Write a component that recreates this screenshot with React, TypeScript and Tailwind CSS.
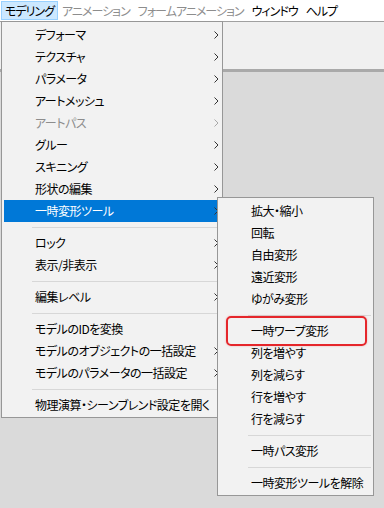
import React from "react"

type Item = { label: string; arrow?: boolean; disabled?: boolean; active?: boolean } | "sep"

const MAIN: Item[] = [
  { label: "デフォーマ", arrow: true },
  { label: "テクスチャ", arrow: true },
  { label: "パラメータ", arrow: true },
  { label: "アートメッシュ", arrow: true },
  { label: "アートパス", arrow: true, disabled: true },
  { label: "グルー", arrow: true },
  { label: "スキニング", arrow: true },
  { label: "形状の編集", arrow: true },
  { label: "一時変形ツール", arrow: true, active: true },
  "sep",
  { label: "ロック", arrow: true },
  { label: "表示/非表示", arrow: true },
  "sep",
  { label: "編集レベル", arrow: true },
  "sep",
  { label: "モデルのIDを変換" },
  { label: "モデルのオブジェクトの一括設定", arrow: true },
  { label: "モデルのパラメータの一括設定", arrow: true },
  "sep",
  { label: "物理演算・シーンブレンド設定を開く" },
]

const SUB: Item[] = [
  { label: "拡大・縮小" },
  { label: "回転" },
  { label: "自由変形" },
  { label: "遠近変形" },
  { label: "ゆがみ変形" },
  "sep",
  { label: "一時ワープ変形" },
  { label: "列を増やす" },
  { label: "列を減らす" },
  { label: "行を増やす" },
  { label: "行を減らす" },
  "sep",
  { label: "一時パス変形" },
  "sep",
  { label: "一時変形ツールを解除" },
]

const BAR = [
  { label: "モデリング", open: true },
  { label: "アニメーション", disabled: true },
  { label: "フォームアニメーション", disabled: true },
  { label: "ウィンドウ" },
  { label: "ヘルプ" },
]

function Chevron({ color }: { color: string }) {
  return (
    <svg width="5" height="8" viewBox="0 0 5 8" fill="none">
      <polyline points="0.5,0.5 4,4 0.5,7.5" stroke={color} strokeWidth="1" />
    </svg>
  )
}

function MenuRows({ items }: { items: Item[] }) {
  return (
    <>
      {items.map((it, i) =>
        it === "sep" ? (
          <div key={i} className="h-[10px] flex items-center ml-[28px]">
            <div className="h-px w-full bg-[#d7d7d7]" />
          </div>
        ) : (
          <div
            key={i}
            className={`h-[22px] flex items-center justify-between pl-[31px] pr-[1px] ${
              it.active ? "bg-[#0078d7] text-white" : it.disabled ? "text-[#8d8d8d]" : "text-black"
            }`}
          >
            <span className="leading-none whitespace-nowrap">{it.label}</span>
            {it.arrow && <Chevron color={it.disabled ? "#a8a8a8" : "#333333"} />}
          </div>
        )
      )}
    </>
  )
}

export default function App() {
  return (
    <div className="relative w-[384px] h-[508px] overflow-hidden bg-[#dadada] text-[12px] tracking-[-0.5px] font-['Noto_Sans_CJK_JP','Noto_Sans',sans-serif] [font-feature-settings:'palt']">
      {/* menu bar */}
      <div className="h-[21px] bg-white flex items-stretch pl-[1px] py-[1px] whitespace-nowrap tracking-[-1px]">
        {BAR.map((b) => (
          <div
            key={b.label}
            className={`shrink-0 px-[3px] flex items-center leading-none border ${
              b.open ? "bg-[#cce8ff] border-[#99d1ff] text-black" : b.disabled ? "border-transparent text-[#8d8d8d]" : "border-transparent text-black"
            }`}
          >
            {b.label}
          </div>
        ))}
      </div>

      {/* toolbar strip behind the menus */}
      <div className="h-[48px] bg-[#f0f0f0] border-t border-[#a0a0a0]" />
      <div className="h-[3px] bg-[#a9a9a9]" />

      {/* main dropdown */}
      <div className="absolute left-[1px] top-[21px] w-[222px] bg-[#f2f2f2] border border-[#979797] px-[2px] pt-[2px] pb-[1px]">
        <MenuRows items={MAIN} />
      </div>

      {/* submenu */}
      <div className="absolute left-[217px] top-[197px] w-[157px] bg-[#f2f2f2] border border-[#979797] px-[2px] pt-[2px] pb-[1px]">
        <MenuRows items={SUB} />
      </div>

      {/* highlight annotation */}
      <div className="absolute left-[226px] top-[316px] w-[141px] h-[30px] border-2 border-[#e5262b] rounded-[5px] shadow-[0_0_2px_rgba(229,38,43,0.35)]" />
    </div>
  )
}
